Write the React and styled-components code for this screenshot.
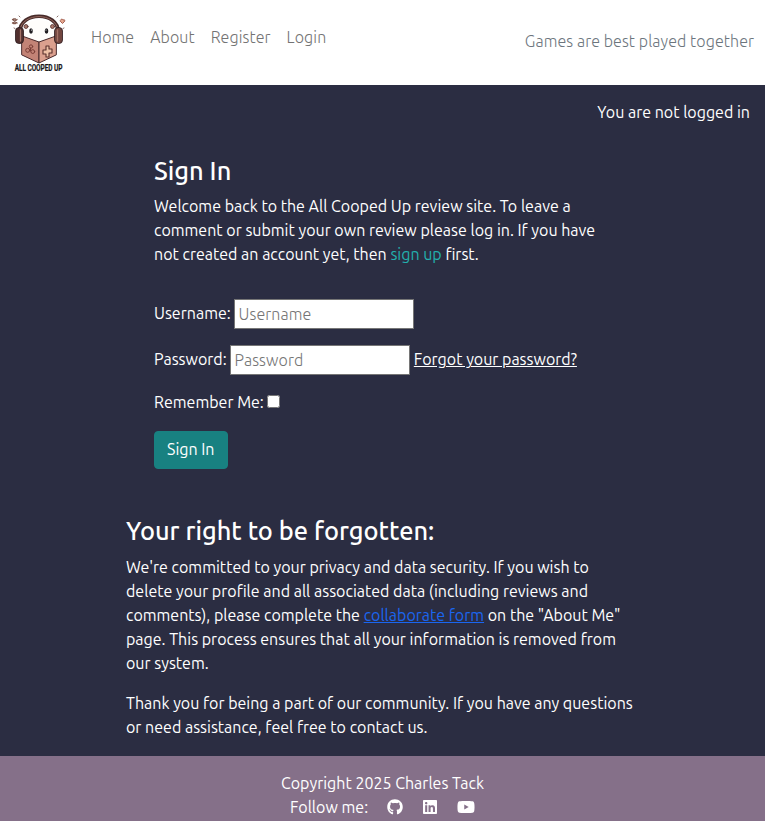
import React from "react";
import styled, { createGlobalStyle } from "styled-components";
import { FaGithub, FaLinkedin, FaYoutube } from "react-icons/fa";

const GlobalStyle = createGlobalStyle`
  *, *::before, *::after { box-sizing: border-box; }
  body {
    margin: 0;
    background: #2b2d42;
    color: #fff;
    font-family: Ubuntu, "Noto Sans", sans-serif;
    font-size: 16px;
    line-height: 24px;
  }
`;

const Page = styled.div`
  display: flex;
  flex-direction: column;
  height: 821px;
  overflow: hidden;
`;

const Header = styled.header`
  display: flex;
  align-items: flex-start;
  flex: none;
  height: 85px;
  padding: 0 11px 0 0;
  background: #fff;
`;

const Brand = styled.a`
  display: block;
  width: 83px;
  height: 85px;
`;

const Logo = styled.svg`
  display: block;
`;

const Nav = styled.nav`
  display: flex;
  padding-top: 25px;
`;

const NavLink = styled.a`
  padding: 0 8px;
  color: #737373;
  font-weight: 300;
  letter-spacing: 0.1px;
  text-decoration: none;
`;

const Tagline = styled.span`
  margin: 29px 0 0 auto;
  color: #6c757d;
  font-weight: 300;
  letter-spacing: 0.09px;
`;

const Status = styled.p`
  margin: 0;
  padding: 15px 15px 0;
  text-align: right;
`;

const Section = styled.section`
  width: ${(p) => p.$width}px;
  margin: ${(p) => p.$top}px 0 0 ${(p) => p.$left}px;
`;

const Heading = styled.h2`
  margin: 0 0 8px;
  font-size: 25.39px;
  font-weight: 500;
  line-height: 1.2;
`;

const Paragraph = styled.p`
  margin: 0 0 16px;
`;

const Link = styled.a`
  color: ${(p) => p.$color};
  text-decoration: ${(p) => (p.$plain ? "none" : "underline")};
`;

const Form = styled.form`
  margin-top: 33px;
`;

const Field = styled.div`
  display: flex;
  align-items: center;
  gap: 3.4px;
  height: ${(p) => p.$height}px;
  margin-bottom: 16px;
  white-space: nowrap;
`;

const Label = styled.label`
  padding-bottom: 2px;
`;

const ForgotLink = styled(Link)`
  padding: 0 0 2px 0.4px;
`;

const Input = styled.input`
  width: 180px;
  height: 30px;
  padding: 1px 3.5px 2px;
  border: 1px solid #767676;
  border-radius: 0;
  background: #fff;
  font: inherit;
  font-weight: 300;
  letter-spacing: 0.1px;
  &::placeholder { color: #757575; opacity: 1; }
`;

const Checkbox = styled.input`
  width: 13px;
  height: 13px;
  margin: 0 0 4px;
`;

const Button = styled.button`
  display: block;
  height: 38px;
  padding: 5px 12px 7px;
  border: 1px solid #188181;
  border-radius: 4px;
  background: #188181;
  color: #fff;
  font: inherit;
`;

const Footer = styled.footer`
  flex: none;
  height: 65px;
  margin-top: auto;
  padding-top: 15px;
  background: #857089;
  text-align: center;
`;

const Social = styled.div`
  display: flex;
  justify-content: center;
  align-items: center;
`;

const SocialLink = styled.a`
  display: flex;
  margin-left: 19px;
  color: #fff;
`;

function CoopLogo() {
  return (
    <Logo width="83" height="85" viewBox="0 0 83 85" fill="none" strokeLinecap="round" strokeLinejoin="round">
      <path d="M22 28c4-5 9-8 17-8s13 3 17 8v12l-17 5-17-5z" fill="#fffdfb" />
      <path d="M20 32C19 11 59 11 58 32" stroke="#472b2a" strokeWidth="3.6" />
      <path d="M20 30C22 12 56 12 58 30" stroke="#96685e" strokeWidth="1" />
      <path d="M22 36l17 6v21l-17-8z" fill="#c38376" stroke="#48282a" />
      <path d="M56 36l-17 6v21l17-8z" fill="#dba08e" stroke="#48282a" />
      <rect x="15.5" y="27.5" width="8" height="16" rx="3.5" fill="#51302f" stroke="#2b1b1e" strokeWidth=".8" />
      <rect x="54.5" y="27.5" width="8" height="16" rx="3.5" fill="#72463f" stroke="#2b1b1e" strokeWidth=".8" />
      <path d="M20.5 30v11M57.5 30v11" stroke="#a57266" strokeWidth="1.3" />
      <circle cx="26" cy="26.5" r="2" fill="#a9766a" stroke="#53302f" strokeWidth=".8" />
      <circle cx="52.5" cy="26.5" r="2" fill="#a9766a" stroke="#53302f" strokeWidth=".8" />
      <ellipse cx="31" cy="31" rx="1.8" ry="2.7" fill="#211e22" />
      <ellipse cx="46.5" cy="31" rx="1.8" ry="2.7" fill="#211e22" />
      <circle cx="31.5" cy="30" r=".6" fill="#fff" />
      <circle cx="46" cy="30" r=".6" fill="#fff" />
      <g stroke="#7b3e37" strokeWidth="1">
        <circle cx="31" cy="46.5" r="1.7" />
        <circle cx="27.7" cy="50.3" r="2" />
        <circle cx="32.8" cy="51.6" r="1.9" />
        <path d="M30.5 48v3" />
      </g>
      <path d="M46 46h3v3h3v4h-3v4h-3v-3h-3v-4h3z" fill="#efc1a6" stroke="#5a302d" strokeWidth="1.1" />
      <path d="M12.5 19.5l4.5 3.5M17 19.5l-4.5 3.5M13.5 19h2M13.5 23.5h2" stroke="#835b50" strokeWidth="1.3" />
      <path d="M60.5 20c1-1.5 2-1 2.5 0 2-1 2.5 1 1 2l-1.5 1.5-2-2z" fill="#e5a68d" stroke="#a35f50" strokeWidth="1" />
      <path d="M19 16l1 1M58 16l-1 1M14 28l1 .5M64 28l-1 .5" stroke="#6b4a43" strokeWidth=".8" />
      <text
        transform="translate(14.8 71) scale(0.78 1)"
        textLength="61"
        lengthAdjust="spacing"
        fill="#181719"
        stroke="#181719"
        strokeWidth=".2"
        fontFamily="Roboto, sans-serif"
        fontSize="8.4"
        fontWeight="700"
      >
        ALL COOPED UP
      </text>
    </Logo>
  );
}

export default function App() {
  return (
    <Page>
      <GlobalStyle />
      <Header>
        <Brand href="#" aria-label="All Cooped Up">
          <CoopLogo />
        </Brand>
        <Nav>
          {["Home", "About", "Register", "Login"].map((item) => (
            <NavLink key={item} href="#">{item}</NavLink>
          ))}
        </Nav>
        <Tagline>Games are best played together</Tagline>
      </Header>
      <Status>You are not logged in</Status>
      <Section $left={154} $top={32} $width={457}>
        <Heading>Sign In</Heading>
        <Paragraph>
          Welcome back to the All Cooped Up review site. To leave a comment or submit your own
          review please log in. If you have not created an account yet, then{" "}
          <Link href="#" $color="#23b0ad" $plain>sign up</Link> first.
        </Paragraph>
        <Form>
          <Field $height={30}>
            <Label htmlFor="username">Username:</Label>
            <Input id="username" placeholder="Username" />
          </Field>
          <Field $height={30}>
            <Label htmlFor="password">Password:</Label>
            <Input id="password" type="password" placeholder="Password" />
            <ForgotLink href="#" $color="#fff">Forgot your password?</ForgotLink>
          </Field>
          <Field $height={24}>
            <Label htmlFor="remember">Remember Me:</Label>
            <Checkbox id="remember" type="checkbox" />
          </Field>
          <Button type="button">Sign In</Button>
        </Form>
      </Section>
      <Section $left={126} $top={47} $width={510}>
        <Heading>Your right to be forgotten:</Heading>
        <Paragraph>
          We're committed to your privacy and data security. If you wish to delete your profile and
          all associated data (including reviews and comments), please complete the{" "}
          <Link href="#" $color="#1a66f0">collaborate form</Link> on the "About Me" page. This
          process ensures that all your information is removed from our system.
        </Paragraph>
        <Paragraph>
          Thank you for being a part of our community. If you have any questions or need
          assistance, feel free to contact us.
        </Paragraph>
      </Section>
      <Footer>
        <div>Copyright 2025 Charles Tack</div>
        <Social>
          <span>Follow me:</span>
          <SocialLink href="#" aria-label="GitHub"><FaGithub /></SocialLink>
          <SocialLink href="#" aria-label="LinkedIn"><FaLinkedin /></SocialLink>
          <SocialLink href="#" aria-label="YouTube"><FaYoutube size={18} /></SocialLink>
        </Social>
      </Footer>
    </Page>
  );
}
